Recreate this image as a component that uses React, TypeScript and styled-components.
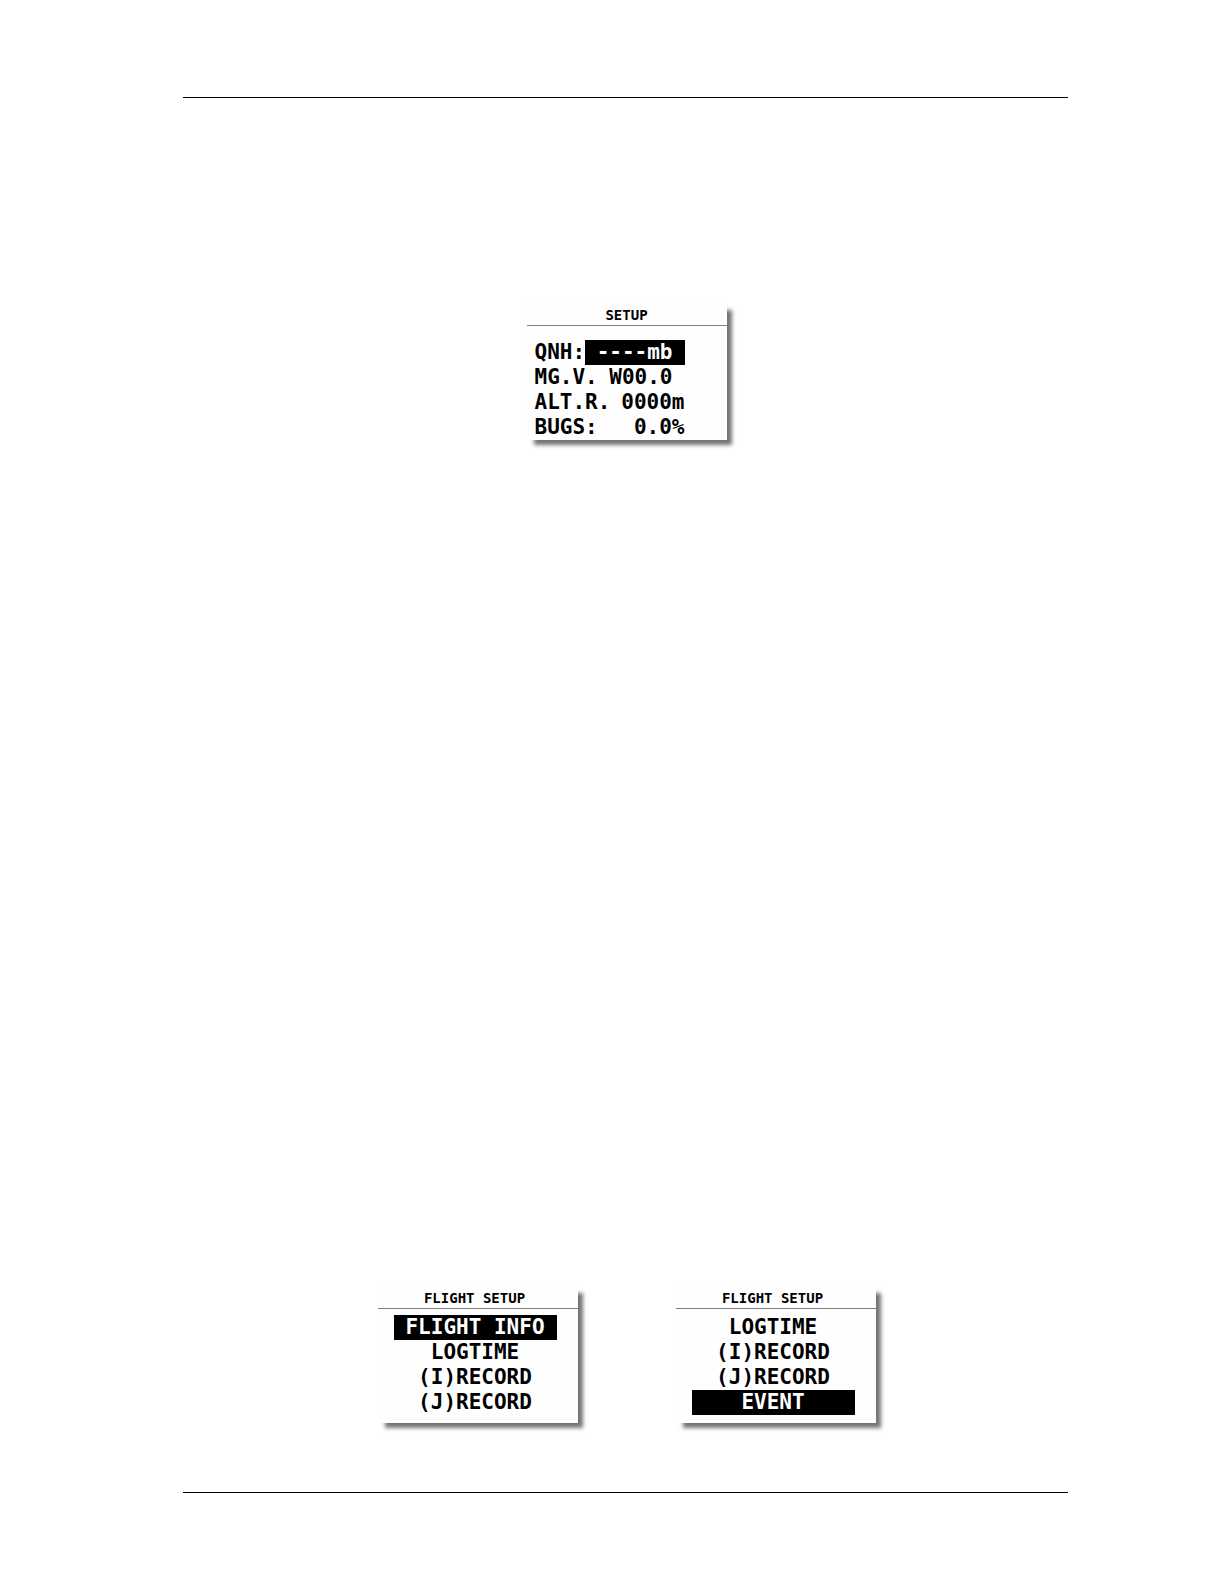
import React from "react";
import styled, { createGlobalStyle } from "styled-components";

const GlobalStyle = createGlobalStyle`
  * { box-sizing: border-box; }
  body { margin: 0; background: #fff; color: #000; }
`;

const Page = styled.main`
  display: flex;
  flex-direction: column;
  min-height: 100vh;
  padding: 97px 156px 91px 183px;
  font-family: "DejaVu Sans Mono", "Liberation Mono", monospace;
`;

const Rule = styled.hr`
  width: 100%;
  height: 1px;
  margin: 0;
  border: 0;
  background: #000;
`;

const Figures = styled.section<{ $before?: number; $after?: number }>`
  display: flex;
  flex-wrap: wrap;
  justify-content: center;
  gap: 98px;
  margin-top: ${(p) => (p.$before ? `${p.$before}px` : "auto")};
  margin-bottom: ${(p) => p.$after ?? 0}px;
  padding-left: 2px;
`;

const Screen = styled.article`
  width: 200px;
  background: #fefefe;
  box-shadow: 6px 6px 4px -1px rgba(0, 0, 0, 0.55);
`;

const Title = styled.h2`
  height: 23px;
  margin: 0;
  padding-right: 6px;
  border-bottom: 1px solid #808080;
  font-size: 14px;
  font-weight: 700;
  line-height: 24px;
  text-align: center;
`;

const SetupTitle = styled(Title)`
  padding-right: 0;
`;

const Fields = styled.dl`
  margin: 0;
  padding: 14px 42px 0 8px;
`;

const Field = styled.div`
  display: flex;
  justify-content: space-between;
  height: 25px;
  font-size: 21px;
  font-weight: 700;
  line-height: 25px;
  white-space: nowrap;
`;

const Label = styled.dt`
  flex: 0 1 auto;
  min-width: 0;
`;

const Value = styled.dd<{ $selected?: boolean; $inset?: boolean }>`
  flex: none;
  width: ${(p) => (p.$selected ? "100px" : "auto")};
  margin: 0;
  padding-right: ${(p) => (p.$inset ? "12px" : "0")};
  background: ${(p) => (p.$selected ? "#000" : "transparent")};
  color: ${(p) => (p.$selected ? "#fff" : "#000")};
  text-align: right;
`;

const Menu = styled.ul`
  margin: 0;
  padding: 6px 21px 8px 16px;
  list-style: none;
`;

const MenuButton = styled.button<{ $selected: boolean }>`
  display: block;
  width: 100%;
  height: 25px;
  padding: 0;
  border: 0;
  background: ${(p) => (p.$selected ? "#000" : "transparent")};
  color: ${(p) => (p.$selected ? "#fff" : "#000")};
  font-family: inherit;
  font-size: 21px;
  font-weight: 700;
  line-height: 25px;
  text-align: center;
  white-space: nowrap;
`;

type SetupField = { label: string; value: string; inset?: boolean; selected?: boolean };

const setupFields: SetupField[] = [
  { label: "QNH:", value: "----mb", inset: true, selected: true },
  { label: "MG.V.", value: "W00.0", inset: true },
  { label: "ALT.R.", value: "0000m" },
  { label: "BUGS:", value: "0.0%" },
];

function FlightMenu({ items, selected }: { items: string[]; selected: string }) {
  return (
    <Screen>
      <Title>FLIGHT SETUP</Title>
      <Menu>
        {items.map((item) => (
          <li key={item}>
            <MenuButton type="button" $selected={item === selected}>
              {item}
            </MenuButton>
          </li>
        ))}
      </Menu>
    </Screen>
  );
}

export default function App() {
  return (
    <>
      <GlobalStyle />
      <Page>
        <Rule />
        <Figures $before={205}>
          <Screen>
            <SetupTitle>SETUP</SetupTitle>
            <Fields>
              {setupFields.map((f) => (
                <Field key={f.label}>
                  <Label>{f.label}</Label>
                  <Value $selected={f.selected} $inset={f.inset}>
                    {f.value}
                  </Value>
                </Field>
              ))}
            </Fields>
          </Screen>
        </Figures>
        <Figures $after={69}>
          <FlightMenu
            items={["FLIGHT INFO", "LOGTIME", "(I)RECORD", "(J)RECORD"]}
            selected="FLIGHT INFO"
          />
          <FlightMenu
            items={["LOGTIME", "(I)RECORD", "(J)RECORD", "EVENT"]}
            selected="EVENT"
          />
        </Figures>
        <Rule />
      </Page>
    </>
  );
}
